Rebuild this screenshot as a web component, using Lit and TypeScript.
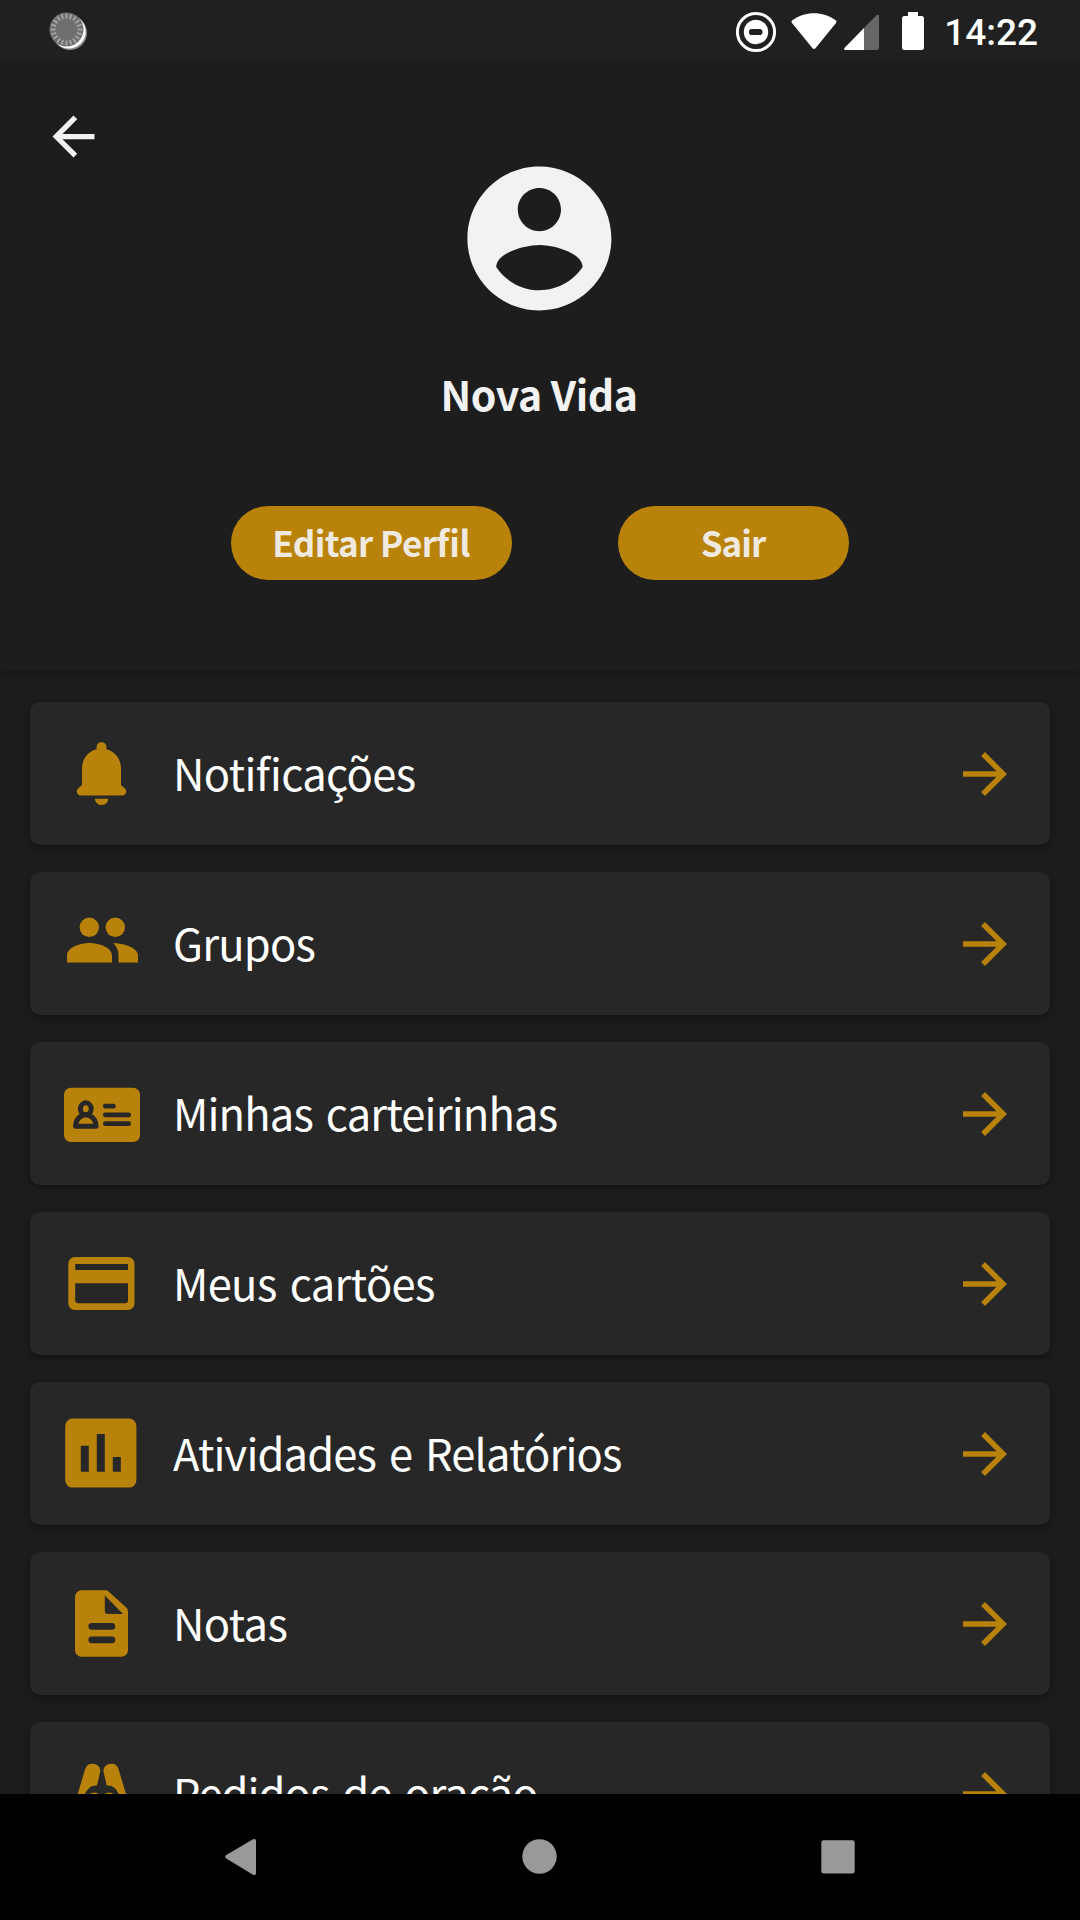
import { LitElement, html, css, svg, type SVGTemplateResult } from "lit";
import { customElement, property } from "lit/decorators.js";

const icons: Record<string, SVGTemplateResult> = {
  bell: svg`<path d="M41.5 10a5 5 0 0 1 4.9 5v2.3C55 19.5 61 27 61 36.5V53l4 3.6c.9.9 1.2 1.5 1.2 2.6 0 2.6-1.7 4.3-4.2 4.3H21c-2.5 0-4.2-1.7-4.2-4.3 0-1.1.3-1.7 1.2-2.6l4-3.6V36.5C22 27 28 19.5 36.6 17.3V15a5 5 0 0 1 4.9-5zM34.9 66.7h13.4a6.7 6.3 0 0 1-13.4 0z"/>`,
  groups: svg`<circle cx="29.3" cy="25.3" r="9.7"/><circle cx="55.3" cy="25.3" r="9.7"/>
    <path d="M7 60.5v-7C7 45 21 41 29.5 41S52 45 52 53.5v7zM53.3 41C64 41.5 78 45.5 78 53.5v7H58.5v-7c0-5-1.8-9-5.2-12.5z"/>`,
  idCard: svg`<rect x="4" y="15.7" width="76" height="54.4" rx="7"/>
    <g class="cut-line"><ellipse cx="25.8" cy="36.8" rx="5.4" ry="6"/><path d="M15.6 54.2C15.6 48 20 42.8 25.8 42.8S36 48 36 54.2z"/></g>
    <g class="cut"><rect x="43" y="31.7" width="12.8" height="4.8" rx="2.2"/><rect x="43" y="40.4" width="28" height="4.8" rx="2.2"/><rect x="43" y="49.2" width="28" height="4.8" rx="2.2"/></g>`,
  card: svg`<path fill-rule="evenodd" d="M14.8 15h53.200a6.5 6.5 0 0 1 6.5 6.5v40a6.5 6.5 0 0 1-6.5 6.5h-53.200A6.5 6.5 0 0 1 8.300 61.5v-40A6.5 6.5 0 0 1 14.8 15zM15.200 22v6h52.800v-6zM15.200 41.3v17a3 3 0 0 0 3 3h46.800a3 3 0 0 0 3-3v-17z"/>`,
  chart: svg`<rect x="5.2" y="6.6" width="71.2" height="69" rx="7.5"/>
    <path class="cut" d="M20.8 33.7h8v26h-8zM36.8 22h8v37.7h-8zM52.8 45h8v14.7h-8z"/>`,
  note: svg`<path fill-rule="evenodd" d="M21.5 8.300h23.300c2 0 3.300.6 4.600 2L66 25.300c1.500 1.500 2 2.700 2 4.700v38.200a6.500 6.500 0 0 1-6.500 6.500h-40a6.500 6.500 0 0 1-6.500-6.500V14.800A6.500 6.500 0 0 1 21.500 8.300zM44.800 13.500V29a3 3 0 0 0 3 3H63z"/>
    <g class="cut"><rect x="28.400" y="41" width="26.800" height="6.800" rx="3.300"/><rect x="28.400" y="54.500" width="26.800" height="6.800" rx="3.300"/></g>`,
  prayer: svg`<path d="M17.700 42l7.500-25C26.200 13.500 29 11.700 32.500 11.700c5 0 8.500 3.800 7.600 8.300L37 33.500c-5-.7-9.500 2.500-12 8.500zM66 42L58.500 17c-1-3.500-3.800-5.300-7.300-5.300-5 0-8.500 3.800-7.600 8.300l3.100 13.500c5-.7 9.500 2.500 12 8.500zM29.500 42c3-2 6.500-2 9.500 0zM44.500 42c3-2 6.500-2 9.500 0z"/>`,
};

interface MenuEntry {
  icon: string;
  label: string;
  spacing: number;
}

const entries: MenuEntry[] = [
  { icon: "bell", label: "Notificações", spacing: -0.65 },
  { icon: "groups", label: "Grupos", spacing: -0.8 },
  { icon: "idCard", label: "Minhas carteirinhas", spacing: -0.85 },
  { icon: "card", label: "Meus cartões", spacing: -0.65 },
  { icon: "chart", label: "Atividades e Relatórios", spacing: -0.86 },
  { icon: "note", label: "Notas", spacing: -0.6 },
  { icon: "prayer", label: "Pedidos de oração", spacing: -0.95 },
];

@customElement("status-bar")
export class StatusBar extends LitElement {
  static styles = css`
    :host { display: flex; height: 62px; box-sizing: border-box; padding: 0 42px 0 46px; background: #202020; align-items: flex-start; justify-content: space-between; }
    svg { display: block; flex: none; }
    .system { display: flex; height: 62px; }
    .time { font: 500 37px/44px Roboto, sans-serif; color: #fff; padding-top: 11px; margin-left: 19px; }
  `;
  render() {
    const ticks = Array.from({ length: 20 }, (_, i) => i * 18);
    return html`
      <svg width="44" height="62" viewBox="46 0 44 62">
        <circle cx="70" cy="33" r="17" fill="#8c8c8c" />
        <circle cx="68.700" cy="31.600" r="17" fill="#fff" />
        <circle cx="66.500" cy="29.500" r="17" fill="#6f6f6f" />
        ${ticks.map((a) => svg`<path d="M66.500 13.500v5" stroke="#a8a8a8" stroke-width="1.700" transform="rotate(${a} 66.5 29.5)"/>`)}
      </svg>
      <div class="system">
        <svg width="190" height="62" viewBox="735 0 190 62" fill="#fff">
          <circle cx="756" cy="32" r="18.600" fill="none" stroke="#fff" stroke-width="3" />
          <circle cx="756" cy="32" r="12.200" />
          <rect x="749" y="29" width="13.500" height="6" rx="2.800" fill="#202020" />
          <path d="M792.300 20.300C805 10.800 823 10.800 835.700 20.300c.900.700 1 1.700.300 2.600L815.500 48.300c-.900 1-2.100 1-3 0L792 22.900c-.700-.900-.600-1.900.3-2.600z" />
          <path d="M845 47.400L876.500 15.300c1-1 2.500-.5 2.500 1V47.500a2.500 2.500 0 0 1-2.500 2.500H845.500c-1.500 0-2-1.500-.5-2.600z" fill="#666" />
          <path d="M864 28v22H845.500c-1.500 0-2-1.500-.5-2.600z" />
          <path d="M908 12h10v4h3.500a2.500 2.500 0 0 1 2.500 2.500v29a2.500 2.500 0 0 1-2.500 2.500h-17a2.500 2.500 0 0 1-2.500-2.500v-29a2.500 2.500 0 0 1 2.500-2.500H908z" />
        </svg>
        <div class="time">14:22</div>
      </div>
    `;
  }
}

@customElement("profile-header")
export class ProfileHeader extends LitElement {
  static styles = css`
    :host { display: flex; flex-direction: column; height: 609px; box-sizing: border-box; background: #1d1d1d; box-shadow: 0 1px 6px 1px rgba(0, 0, 0, 0.24); }
    svg { display: block; flex: none; }
    .bar { height: 90px; padding: 43px 0 0 41.800px; box-sizing: border-box; }
    .avatar { align-self: center; margin-right: 1.500px; }
    .name { margin-top: 37px; padding-right: 2px; text-align: center; font-weight: 700; font-size: 41px; line-height: 62px; letter-spacing: -0.4px; color: #f2f2f2; }
    .actions { display: flex; margin: 82px 0 0 231px; gap: 106px; }
    .action { height: 74px; width: 281px; border: 0; border-radius: 37px; padding: 0 1px 2px 0; background: #b8820b; color: #f0e9df; font: inherit; font-weight: 700; font-size: 35px; line-height: 72px; letter-spacing: -0.6px; text-align: center; font-feature-settings: "liga" 1; }
    .action.short { width: 231px; letter-spacing: -1px; }
  `;
  render() {
    return html`
      <div class="bar">
        <svg width="63" height="63" viewBox="0 0 24 24" fill="#f2f2f2"><path d="M20 11H7.830l5.590-5.590L12 4l-8 8 8 8 1.410-1.410L7.830 13H20v-2z" /></svg>
      </div>
      <svg class="avatar" width="172.800" height="172.800" viewBox="0 0 24 24" fill="#f2f2f2">
        <path d="M12 2C6.480 2 2 6.480 2 12s4.480 10 10 10 10-4.480 10-10S17.520 2 12 2zm0 3c1.660 0 3 1.340 3 3s-1.340 3-3 3-3-1.340-3-3 1.340-3 3-3zm0 14.200c-2.500 0-4.710-1.280-6-3.220.030-1.990 4-3.080 6-3.080 1.990 0 5.970 1.090 6 3.080-1.290 1.940-3.500 3.220-6 3.220z" />
      </svg>
      <div class="name">Nova Vida</div>
      <div class="actions">
        <button class="action">Editar Perfil</button>
        <button class="action short">Sair</button>
      </div>
    `;
  }
}

@customElement("menu-card")
export class MenuCard extends LitElement {
  @property({ attribute: false }) entry!: MenuEntry;
  static styles = css`
    :host { display: flex; flex: none; align-items: flex-start; height: 143px; box-sizing: border-box; padding: 0 32.500px 0 30px; border-radius: 10px; background: #272727; box-shadow: 0 3px 6px rgba(0, 0, 0, 0.32); }
    svg { display: block; flex: none; fill: #b8820b; }
    .icon { margin-top: 30px; }
    .cut { fill: #272727; }
    .cut-line { fill: none; stroke: #272727; stroke-width: 5; stroke-linejoin: round; }
    .label { flex: 1; margin-left: 29px; padding-top: 39px; font-size: 43.500px; line-height: 64px; word-spacing: 4px; color: #fff; white-space: nowrap; font-feature-settings: "liga" 1; }
    .go { margin-top: 39px; }
  `;
  render() {
    return html`
      <svg class="icon" width="84" height="84" viewBox="0 0 84 84">${icons[this.entry.icon]}</svg>
      <div class="label" style="letter-spacing:${this.entry.spacing}px">${this.entry.label}</div>
      <svg class="go" width="66" height="66" viewBox="0 0 24 24"><path d="M12 4l-1.410 1.410L16.170 11H4v2h12.170l-5.580 5.590L12 20l8-8z" /></svg>
    `;
  }
}

@customElement("nav-bar")
export class NavBar extends LitElement {
  static styles = css`
    :host { display: flex; height: 126px; background: #000; align-items: center; justify-content: space-between; padding: 0 221px; box-sizing: border-box; }
    svg { display: block; fill: #999; }
  `;
  render() {
    return html`
      <svg width="40" height="40" viewBox="0 0 40 40"><path d="M5.300 18L32 2.300c1.500-.9 3-.2 3 1.500v32.400c0 1.700-1.500 2.400-3 1.500L5.300 21.500c-1.400-.9-1.400-2.600 0-3.500z" /></svg>
      <svg width="40" height="40" viewBox="0 0 40 40"><circle cx="19.500" cy="19.500" r="17.200" /></svg>
      <svg width="40" height="40" viewBox="0 0 40 40"><rect x="2.300" y="3.200" width="33.400" height="33.400" rx="2.500" /></svg>
    `;
  }
}

@customElement("app-root")
export class AppRoot extends LitElement {
  static styles = css`
    :host { display: flex; flex-direction: column; width: 1080px; height: 1920px; overflow: hidden; background: #1c1c1c; font-family: "Noto Sans CJK SC", "Open Sans", sans-serif; }
    status-bar, profile-header, nav-bar { flex: none; }
    status-bar { position: relative; z-index: 1; }
    .menu { flex: 1; min-height: 0; overflow: hidden; display: flex; flex-direction: column; gap: 27px; padding: 31px 30px 0; }
  `;
  render() {
    return html`
      <status-bar></status-bar>
      <profile-header></profile-header>
      <div class="menu">${entries.map((e) => html`<menu-card .entry=${e}></menu-card>`)}</div>
      <nav-bar></nav-bar>
    `;
  }
}
